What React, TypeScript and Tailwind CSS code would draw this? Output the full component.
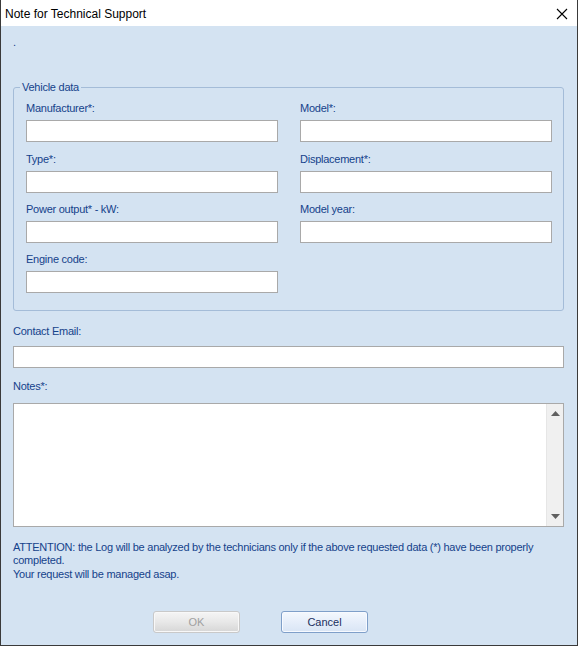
import React from "react";

const labelCls = "block h-[13px] leading-[13px] text-[11px] tracking-[-0.25px] text-[#15428b] whitespace-nowrap";
const inputCls = "block w-[252px] h-[22px] border border-[#a9a9a9] bg-white outline-none";

function Field({ label }: { label: string }) {
  return (
    <div className="flex flex-col">
      <span className={labelCls}>{label}</span>
      <input className={inputCls + " mt-[5px]"} />
    </div>
  );
}

export default function App() {
  return (
    <div
      className="w-[578px] h-[646px] flex flex-col border-l border-r border-b border-[#3a3a3a] bg-[#d4e3f2] overflow-hidden"
      style={{ fontFamily: '"Liberation Sans", Arial, sans-serif' }}
    >
      {/* Title bar */}
      <div className="h-[26px] bg-white flex items-center justify-between pl-[4px] pr-[9px] shrink-0">
        <span
          className="text-[12px] text-black leading-[16px] mt-[1px]"
          style={{ fontFamily: '"Liberation Sans", "Noto Sans", sans-serif' }}
        >
          Note for Technical Support
        </span>
        <svg width="12" height="12" viewBox="0 0 12 12" className="mt-[1px]">
          <path d="M1 1 L11 11 M11 1 L1 11" stroke="#000" strokeWidth="1.1" />
        </svg>
      </div>

      {/* Content */}
      <div className="flex-1 flex flex-col px-[12px]">
        <div className={labelCls + " mt-[10px]"}>.</div>

        <fieldset className="mt-[32px] w-[551px] border border-[#a4bcd8] rounded-[3px] pl-[12px] pr-[10px] pt-[8px] pb-[17px]">
          <legend className="-ml-[6px] px-[2px] h-[13px] leading-[13px] text-[11px] tracking-[-0.25px] text-[#15428b]">
            Vehicle data
          </legend>
          <div className="flex flex-col">
            <div className="flex gap-x-[22px]">
              <Field label="Manufacturer*:" />
              <Field label="Model*:" />
            </div>
            <div className="flex gap-x-[22px] mt-[11px]">
              <Field label="Type*:" />
              <Field label="Displacement*:" />
            </div>
            <div className="flex gap-x-[22px] mt-[10px]">
              <Field label="Power output* - kW:" />
              <Field label="Model year:" />
            </div>
            <div className="flex gap-x-[22px] mt-[10px]">
              <Field label="Engine code:" />
            </div>
          </div>
        </fieldset>

        <span className={labelCls + " mt-[14px]"}>Contact Email:</span>
        <input className="block mt-[8px] w-[551px] h-[22px] border border-[#a9a9a9] bg-white outline-none" />

        <span className={labelCls + " mt-[12px]"}>Notes*:</span>
        <div className="mt-[10px] w-[551px] h-[124px] border border-[#a9a9a9] bg-white flex">
          <textarea className="flex-1 resize-none outline-none bg-white" />
          <div className="w-[17px] bg-[#f0f0f0] border-l border-[#e6e6e6] flex flex-col items-center justify-between py-[7px]">
            <svg width="9" height="5" viewBox="0 0 9 5">
              <path d="M0 5 L4.5 0 L9 5 Z" fill="#606060" />
            </svg>
            <svg width="9" height="5" viewBox="0 0 9 5">
              <path d="M0 0 L9 0 L4.5 5 Z" fill="#606060" />
            </svg>
          </div>
        </div>

        <div className="mt-[14px] w-[551px] text-[11px] leading-[13.4px] tracking-[-0.25px] text-[#15428b]">
          <div>
            ATTENTION: the Log will be analyzed by the technicians only if the above requested data (*) have been properly completed.
          </div>
          <div>Your request will be managed asap.</div>
        </div>

        <div className="mt-[30px] flex gap-x-[41px] pl-[140px]">
          <button
            disabled
            className="w-[87px] h-[22px] rounded-[3px] border border-[#c9c9c9] bg-gradient-to-b from-[#f5f5f5] via-[#e8e8e8] to-[#d6d6d6] text-[11px] text-[#a0a0a0] shadow-[inset_0_0_0_1px_#f8f8f8]"
          >
            OK
          </button>
          <button className="w-[87px] h-[22px] rounded-[3px] border border-[#7f9fc9] bg-gradient-to-b from-[#f4f8fd] via-[#e6eefa] to-[#d9e5f5] text-[11px] text-[#1b2f5e] shadow-[inset_0_0_0_1px_#f7faff]">
            Cancel
          </button>
        </div>
      </div>
    </div>
  );
}
